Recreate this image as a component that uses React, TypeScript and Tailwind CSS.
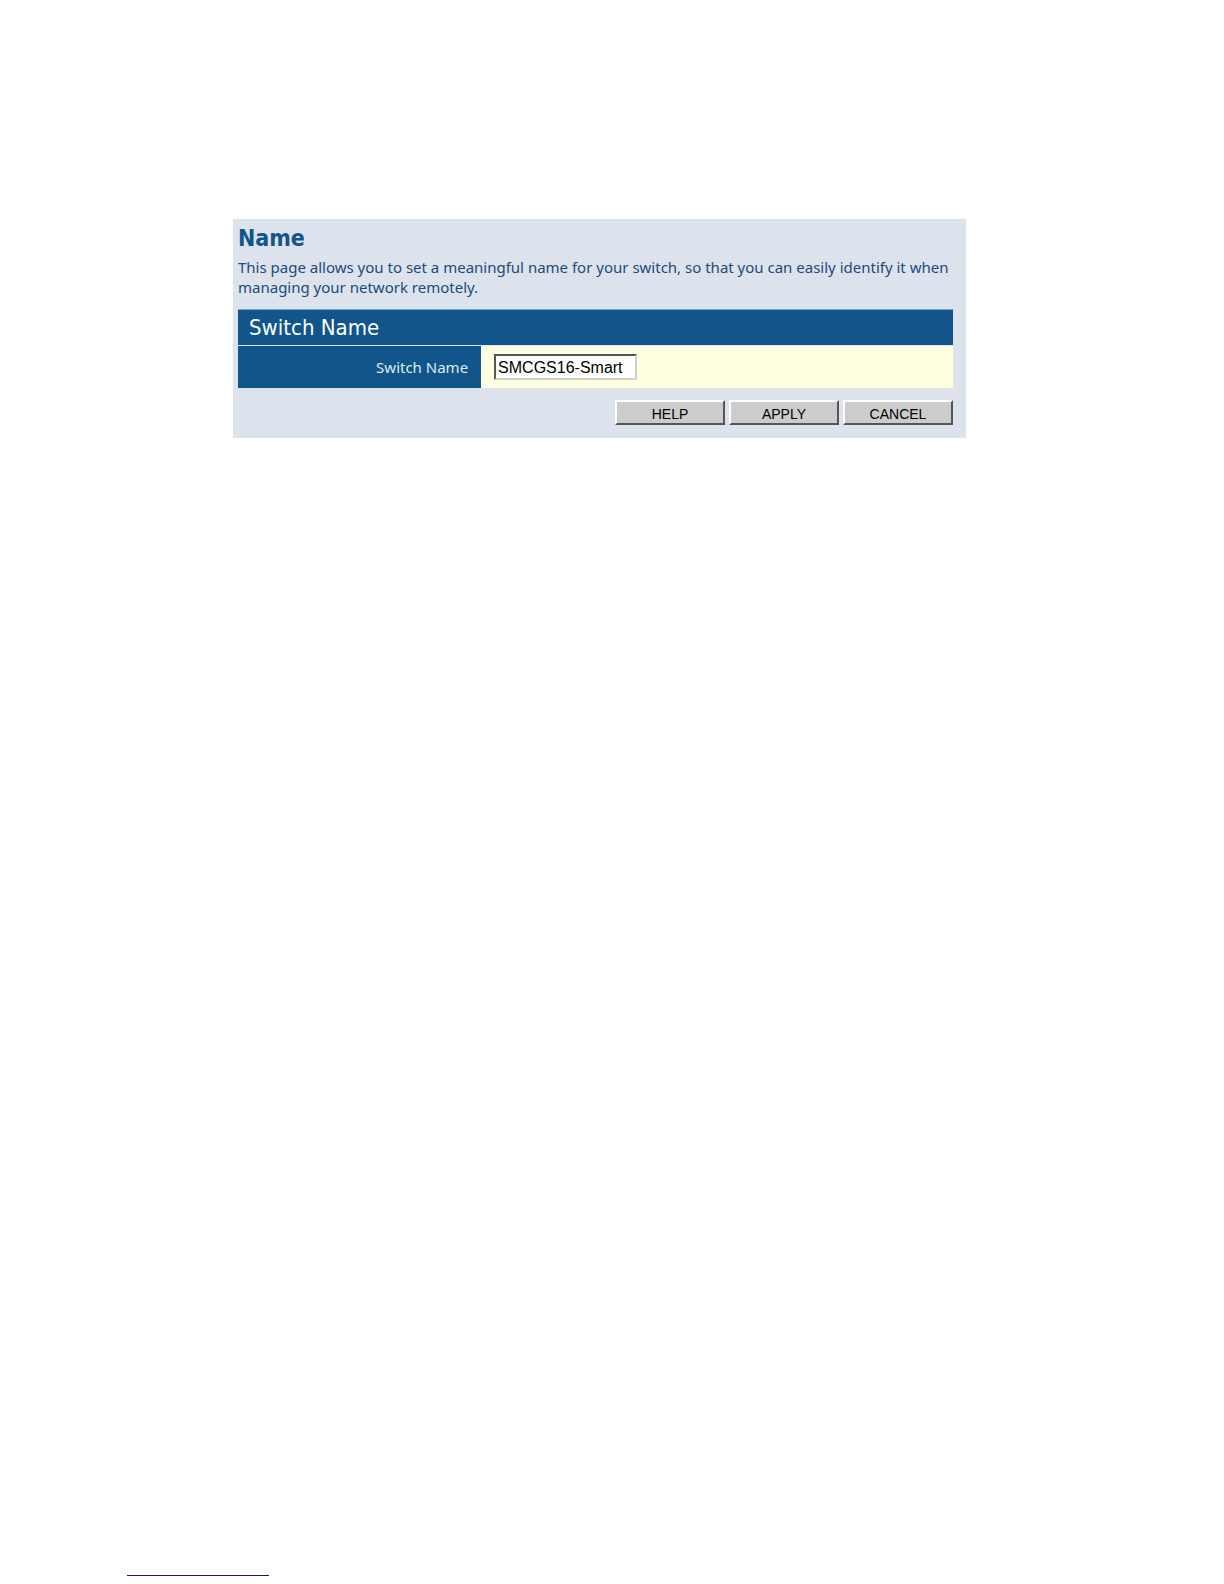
import { useState } from 'react';

const DEFAULT_NAME = 'SMCGS16-Smart';

export default function SwitchNamePage() {
  const [name, setName] = useState(DEFAULT_NAME);

  return (
    <div className="flex min-h-screen flex-col bg-white font-['Noto_Sans',sans-serif]">
      <main className="mt-[219px] mr-[258px] ml-[233px] bg-[#dce3ec] pt-1 pr-[13px] pb-[13px] pl-[5px]">
        <h1 className="font-['DejaVu_Sans_Condensed','DejaVu_Sans',sans-serif] text-[23px] leading-[30px] font-bold text-[#11558a]">Name</h1>
        <p className="mt-1 text-[15px] leading-5 text-[#1d4a7c]">
          This page allows you to set a meaningful name for your switch, so that you can easily identify it when
          managing your network remotely.
        </p>

        <form className="mt-3" onSubmit={(e) => e.preventDefault()}>
          <h2 className="border-t border-[#6fa5d0] bg-[#11558a] pl-[11px] font-['DejaVu_Sans_Condensed','DejaVu_Sans',sans-serif] text-[22px] leading-[35px] text-white">Switch Name</h2>
          <div className="mt-px flex h-[42px]">
            <label htmlFor="switch-name" className="flex w-[34%] items-center justify-end bg-[#11558a] pr-[13px] text-[15px] text-[#dcecf2]">
              Switch Name
            </label>
            <div className="flex flex-1 items-center bg-[#ffffe1] pl-[13px]">
              <input
                id="switch-name"
                type="text"
                value={name}
                onChange={(e) => setName(e.target.value)}
                className={inputCls}
              />
            </div>
          </div>
          <div className="mt-3 flex justify-end gap-1">
            <button type="button" className={buttonCls}>HELP</button>
            <button type="submit" className={buttonCls}>APPLY</button>
            <button type="button" onClick={() => setName(DEFAULT_NAME)} className={buttonCls}>CANCEL</button>
          </div>
        </form>
      </main>

      <footer className="mt-auto mb-2 ml-[127px] w-[142px] border-t border-[#12128a]" />
    </div>
  );
}

const inputCls =
  "h-[26px] w-[143px] border-2 border-t-[#555555] border-r-[#d4d0c8] border-b-[#d4d0c8] border-l-[#555555] bg-white px-0.5 pt-0.5 font-['Liberation_Sans',sans-serif] text-base leading-5 text-black focus:outline-none";

const buttonCls =
  "h-[25px] w-[110px] border-2 border-t-white border-r-[#555555] border-b-[#555555] border-l-white bg-[#cccccc] pt-1 font-['Liberation_Sans',sans-serif] text-sm leading-[17px] text-black";
